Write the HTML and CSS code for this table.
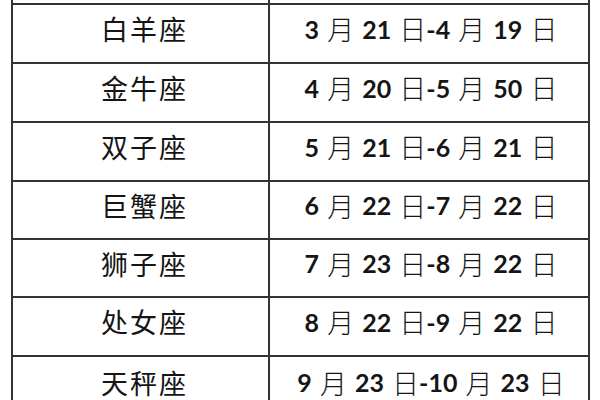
FILE: index.html
```html
<!DOCTYPE html>
<html lang="zh-CN">
<head>
<meta charset="utf-8">
<title>星座日期</title>
<link rel="stylesheet" href="styles.css">
</head>
<body>
<div class="table">
  <div class="cell top"></div><div class="cell top"></div>
  <div class="cell name">白羊座</div><div class="cell date">3 <span class="c">月</span> 21 <span class="c">日</span>-4 <span class="c">月</span> 19 <span class="c">日</span></div>
  <div class="cell name">金牛座</div><div class="cell date">4 <span class="c">月</span> 20 <span class="c">日</span>-5 <span class="c">月</span> 50 <span class="c">日</span></div>
  <div class="cell name">双子座</div><div class="cell date">5 <span class="c">月</span> 21 <span class="c">日</span>-6 <span class="c">月</span> 21 <span class="c">日</span></div>
  <div class="cell name">巨蟹座</div><div class="cell date">6 <span class="c">月</span> 22 <span class="c">日</span>-7 <span class="c">月</span> 22 <span class="c">日</span></div>
  <div class="cell name">狮子座</div><div class="cell date">7 <span class="c">月</span> 23 <span class="c">日</span>-8 <span class="c">月</span> 22 <span class="c">日</span></div>
  <div class="cell name">处女座</div><div class="cell date">8 <span class="c">月</span> 22 <span class="c">日</span>-9 <span class="c">月</span> 22 <span class="c">日</span></div>
  <div class="cell name">天秤座</div><div class="cell date">9 <span class="c">月</span> 23 <span class="c">日</span>-10 <span class="c">月</span> 23 <span class="c">日</span></div>
</div>
</body>
</html>
```
FILE: styles.css
```css
html, body {
  margin: 0;
  padding: 0;
  background: #ffffff;
  overflow: hidden;
}

.table {
  margin-left: 11px;
  width: fit-content;
  display: grid;
  grid-template-columns: 255px 318px;
  grid-template-rows: 3px 57px 57px 57px 56px 56px 57px 60px;
  gap: 2px;
  padding: 0 2px;
  background: #333333;
}

.cell {
  background: #ffffff;
  display: flex;
  align-items: center;
  justify-content: center;
  padding-bottom: 10px;
  box-sizing: border-box;
  color: #151515;
  white-space: pre;
}

.cell.top {
  padding: 0;
}

.name {
  font-family: "Noto Sans CJK SC", sans-serif;
  font-weight: 400;
  font-size: 27px;
  letter-spacing: 2px;
  padding-left: 8px;
}

.date {
  font-family: "Lato", "Noto Sans CJK SC", sans-serif;
  font-weight: 700;
  font-size: 25px;
  word-spacing: 2px;
  padding-left: 4px;
}

.date .c {
  font-family: "Noto Sans CJK SC", sans-serif;
  font-weight: 300;
  font-size: 27px;
}
```
